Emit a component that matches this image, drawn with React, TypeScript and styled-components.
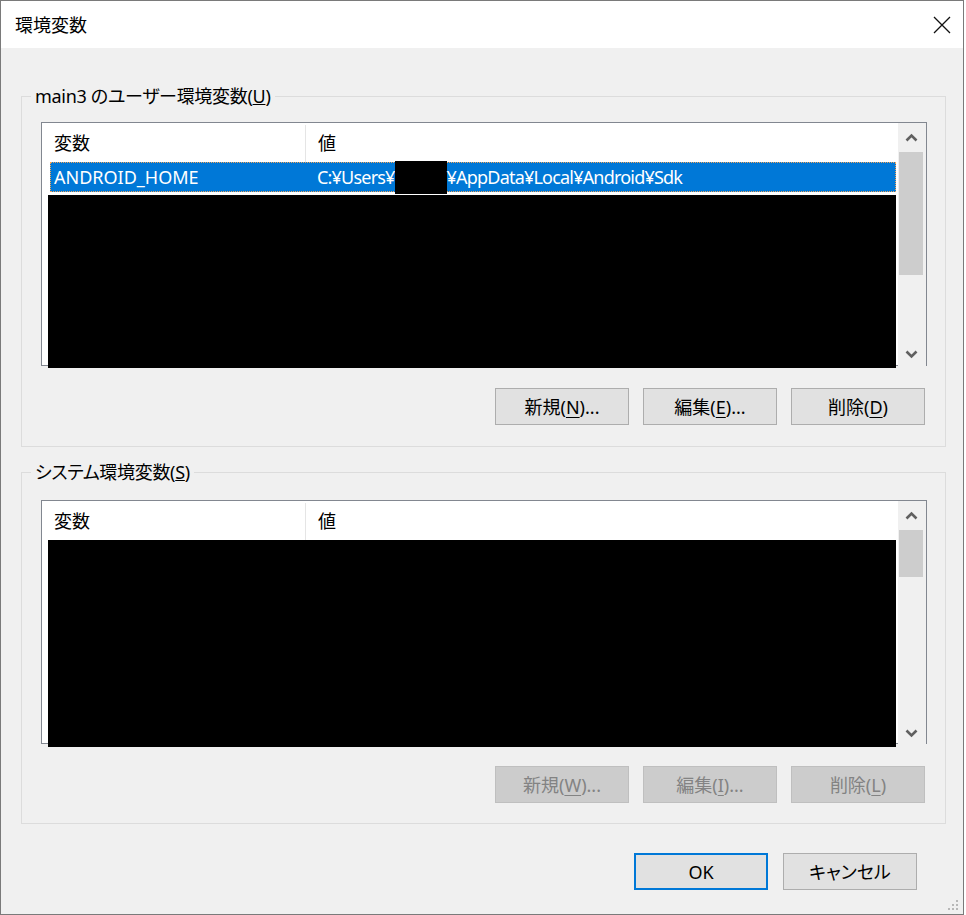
import React from "react";
import styled, { createGlobalStyle } from "styled-components";

const FONT = `"Noto Sans", "Noto Sans CJK JP", sans-serif`;

const Global = createGlobalStyle`
  html, body { margin: 0; padding: 0; background: #ffffff; }
  body { font-family: ${FONT}; }
`;

const Window = styled.div`
  box-sizing: border-box;
  width: 964px;
  height: 915px;
  border: 1px solid #7a7a7a;
  background: #f0f0f0;
  display: flex;
  flex-direction: column;
  font-family: ${FONT};
  font-size: 18px;
  font-feature-settings: "palt";
  color: #000;
  position: relative;
`;

const TitleBar = styled.div`
  flex: none;
  height: 47px;
  background: #ffffff;
  display: flex;
  align-items: center;
  justify-content: space-between;
  padding-left: 14px;
`;

const Title = styled.div`
  font-size: 18px;
  line-height: 24px;
  margin-top: 1px;
  font-feature-settings: normal;
`;

const CloseBox = styled.div`
  width: 32px;
  height: 32px;
  margin-right: 5px;
  display: flex;
  align-items: center;
  justify-content: center;
`;

const Body = styled.div`
  flex: 1;
  display: flex;
  flex-direction: column;
  padding: 36px 17px 0 20px;
`;

const Group = styled.fieldset<{ $top: number; $bottom: number; $gap?: number }>`
  margin: ${(p) => p.$gap ?? 0}px 0 0 0;
  border: 1px solid #dcdcdc;
  padding: ${(p) => p.$top}px 18px ${(p) => p.$bottom}px 19px;
  min-width: 0;
  display: flex;
  flex-direction: column;
`;

const Legend = styled.legend`
  padding: 0 4px;
  margin-left: -10px;
  font-size: 18px;
  line-height: 24px;
  letter-spacing: -0.3px;
`;

const List = styled.div`
  box-sizing: border-box;
  height: 244px;
  border: 1px solid #828790;
  background: #ffffff;
  display: grid;
  grid-template-columns: 1fr 28px;
`;

const ListContent = styled.div`
  display: flex;
  flex-direction: column;
  min-width: 0;
  padding-right: 2px;
`;

const Header = styled.div`
  height: 39px;
  flex: none;
  display: flex;
  align-items: stretch;
`;

const HeadCell = styled.div<{ $w?: number }>`
  box-sizing: border-box;
  ${(p) => (p.$w ? `width: ${p.$w}px; border-right: 1px solid #e5e5e5;` : "flex: 1;")}
  margin-top: 2px;
  padding-left: 12px;
  padding-bottom: 1px;
  display: flex;
  align-items: center;
  line-height: 24px;
`;

const Row = styled.div`
  box-sizing: border-box;
  height: 30px;
  flex: none;
  margin-left: 8px;
  background: #0078d7;
  border: 1px dotted #f2a65a;
  color: #ffffff;
  display: flex;
  align-items: stretch;
`;

const Cell = styled.div<{ $w?: number; $tight?: boolean }>`
  box-sizing: border-box;
  ${(p) => (p.$w ? `width: ${p.$w}px;` : "flex: 1;")}
  padding-left: 3px;
  display: flex;
  align-items: center;
  white-space: nowrap;
  line-height: 24px;
  letter-spacing: ${(p) => (p.$tight ? "-0.8px" : "normal")};
`;

const Redact = styled.span<{ $w: number; $h: number }>`
  display: block;
  flex: none;
  align-self: flex-start;
  width: ${(p) => p.$w}px;
  height: ${(p) => p.$h}px;
  margin-top: -2px;
  background: #000000;
`;

const Blackout = styled.div<{ $h: number; $top: number }>`
  flex: none;
  margin: ${(p) => p.$top}px 0 0 6px;
  height: ${(p) => p.$h}px;
  background: #000000;
  position: relative;
`;

const ScrollBar = styled.div`
  background: #f0f0f0;
  display: flex;
  flex-direction: column;
  padding-right: 2px;
`;

const ArrowBox = styled.div`
  height: 28px;
  flex: none;
  display: flex;
  align-items: center;
  justify-content: center;
`;

const Track = styled.div`
  flex: 1;
  display: flex;
  flex-direction: column;
  padding: 1px 1px;
`;

const Thumb = styled.div<{ $h: number }>`
  height: ${(p) => p.$h}px;
  background: #cdcdcd;
`;

const ButtonRow = styled.div<{ $top: number }>`
  display: flex;
  justify-content: flex-end;
  gap: 14px;
  margin-top: ${(p) => p.$top}px;
  padding-right: 2px;
`;

const Btn = styled.div<{ $disabled?: boolean; $default?: boolean }>`
  box-sizing: border-box;
  width: 134px;
  height: 37px;
  display: flex;
  align-items: center;
  justify-content: center;
  font-size: 18px;
  line-height: 24px;
  background: ${(p) => (p.$disabled ? "#cccccc" : "#e1e1e1")};
  border: ${(p) =>
    p.$default ? "2px solid #0078d7" : p.$disabled ? "1px solid #bfbfbf" : "1px solid #adadad"};
  color: ${(p) => (p.$disabled ? "#838383" : "#000000")};
  white-space: nowrap;
  u { text-underline-offset: 3px; }
`;

const Footer = styled.div`
  display: flex;
  justify-content: flex-end;
  gap: 15px;
  margin-top: 29px;
  margin-right: 29px;
`;

const Grip = styled.svg`
  position: absolute;
  right: 4px;
  bottom: 3px;
`;

const Chevron = ({ up }: { up?: boolean }) => (
  <svg width="13" height="9" viewBox="0 0 13 9">
    <polyline
      points={up ? "1.5,7.5 6.5,2.5 11.5,7.5" : "1.5,1.5 6.5,6.5 11.5,1.5"}
      fill="none"
      stroke="#606060"
      strokeWidth="2.6"
    />
  </svg>
);

const ScrollV = ({ thumb }: { thumb: number }) => (
  <ScrollBar>
    <ArrowBox>
      <Chevron up />
    </ArrowBox>
    <Track>
      <Thumb $h={thumb} />
    </Track>
    <ArrowBox>
      <Chevron />
    </ArrowBox>
  </ScrollBar>
);

export default function App() {
  return (
    <>
      <Global />
      <Window>
        <TitleBar>
          <Title>環境変数</Title>
          <CloseBox>
            <svg width="18" height="18" viewBox="0 0 18 18">
              <path d="M1 1 L17 17 M17 1 L1 17" stroke="#111" strokeWidth="1.3" fill="none" />
            </svg>
          </CloseBox>
        </TitleBar>
        <Body>
          <Group $top={14} $bottom={21}>
            <Legend>
              main3 のユーザー環境変数(<u>U</u>)
            </Legend>
            <List>
              <ListContent>
                <Header>
                  <HeadCell $w={264}>変数</HeadCell>
                  <HeadCell>値</HeadCell>
                </Header>
                <Row>
                  <Cell $w={263}>ANDROID_HOME</Cell>
                  <Cell $tight>
                    C:¥Users¥
                    <Redact $w={52} $h={33} />
                    ¥AppData¥Local¥Android¥Sdk
                  </Cell>
                </Row>
                <Blackout $top={3} $h={173} />
              </ListContent>
              <ScrollV thumb={123} />
            </List>
            <ButtonRow $top={22}>
              <Btn>
                新規(<u>N</u>)...
              </Btn>
              <Btn>
                編集(<u>E</u>)...
              </Btn>
              <Btn>
                削除(<u>D</u>)
              </Btn>
            </ButtonRow>
          </Group>
          <Group $top={16} $bottom={20} $gap={13}>
            <Legend>
              システム環境変数(<u>S</u>)
            </Legend>
            <List>
              <ListContent>
                <Header>
                  <HeadCell $w={264}>変数</HeadCell>
                  <HeadCell>値</HeadCell>
                </Header>
                <Blackout $top={0} $h={207} />
              </ListContent>
              <ScrollV thumb={47} />
            </List>
            <ButtonRow $top={22}>
              <Btn $disabled>
                新規(<u>W</u>)...
              </Btn>
              <Btn $disabled>
                編集(<u>I</u>)...
              </Btn>
              <Btn $disabled>
                削除(<u>L</u>)
              </Btn>
            </ButtonRow>
          </Group>
          <Footer>
            <Btn $default>OK</Btn>
            <Btn>キャンセル</Btn>
          </Footer>
        </Body>
        <Grip width="12" height="12" viewBox="0 0 12 12">
          {[
            [10, 2],
            [6, 6],
            [10, 6],
            [2, 10],
            [6, 10],
            [10, 10],
          ].map(([x, y], i) => (
            <rect key={i} x={x - 1} y={y - 1} width="2" height="2" fill="#b8b8b8" />
          ))}
        </Grip>
      </Window>
    </>
  );
}
